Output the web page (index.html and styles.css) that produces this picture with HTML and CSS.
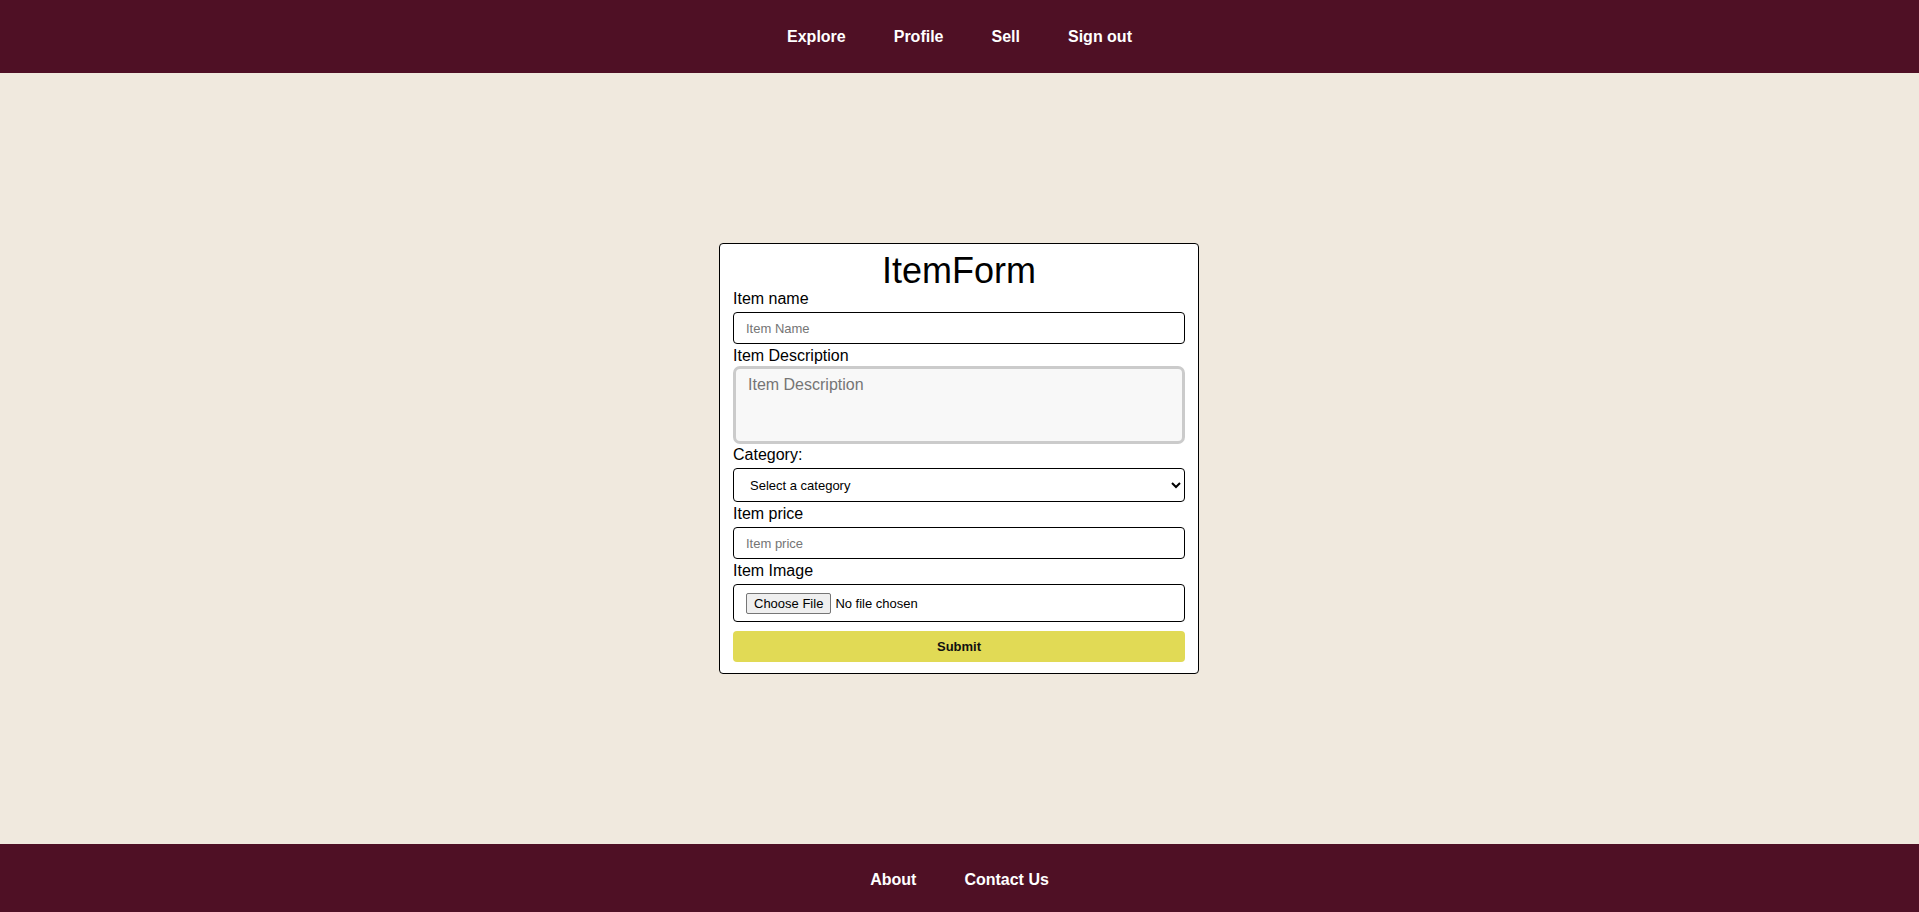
FILE: index.html
```html
<!DOCTYPE html>
<html lang="en">
<head>
<meta charset="utf-8">
<title>ItemForm</title>
<link rel="stylesheet" href="styles.css">
</head>
<body>
<header class="topbar">
  <a class="nav-link" href="#">Explore</a>
  <a class="nav-link" href="#">Profile</a>
  <a class="nav-link" href="#">Sell</a>
  <a class="nav-link" href="#">Sign out</a>
</header>
<main class="main">
  <form class="card">
    <h1 class="card-title">ItemForm</h1>
    <label class="field-label" for="name">Item name</label>
    <input class="text-input input-first" id="name" type="text" placeholder="Item Name">
    <label class="field-label" for="desc">Item Description</label>
    <textarea class="desc-input" id="desc" placeholder="Item Description"></textarea>
    <label class="field-label" for="cat">Category:</label>
    <select class="select-input" id="cat">
      <option>Select a category</option>
      <option>Electronics</option>
      <option>Clothing</option>
      <option>Books</option>
    </select>
    <label class="field-label" for="price">Item price</label>
    <input class="text-input input-price" id="price" type="text" placeholder="Item price">
    <label class="field-label" for="img">Item Image</label>
    <input class="file-input" id="img" type="file">
    <button class="submit-btn" type="button">Submit</button>
  </form>
</main>
<footer class="bottombar">
  <a class="nav-link" href="#">About</a>
  <a class="nav-link" href="#">Contact Us</a>
</footer>
</body>
</html>
```

FILE: styles.css
```css
* { box-sizing: border-box; }

html, body { height: 100%; }

body {
  margin: 0;
  min-height: 100vh;
  display: flex;
  flex-direction: column;
  background: #f0e9de;
  font-family: "Liberation Sans", Arial, sans-serif;
  color: #000;
}

.topbar {
  height: 73px;
  flex: none;
  background: #4f1025;
  display: flex;
  justify-content: center;
  align-items: center;
  gap: 48px;
}

.nav-link {
  color: #fff;
  font-weight: bold;
  font-size: 16px;
  line-height: 18px;
  text-decoration: none;
}

.main {
  flex: 1;
  display: flex;
  justify-content: center;
  align-items: center;
}

.card {
  width: 480px;
  margin-right: 1px;
  background: #fff;
  border: 1px solid #000;
  border-radius: 4px;
  padding: 7px 13px 11px;
  display: flex;
  flex-direction: column;
}

.card-title {
  margin: 0;
  font-size: 36px;
  font-weight: normal;
  line-height: 39px;
  text-align: center;
}

.field-label {
  display: block;
  font-size: 16px;
  line-height: 18px;
}

.text-input {
  height: 32px;
  border: 1px solid #000;
  border-radius: 4px;
  padding: 0 12px;
  font-family: "Liberation Sans", Arial, sans-serif;
  font-size: 13px;
  background: #fff;
  outline: none;
}

.text-input::placeholder { color: #757575; }

.input-first { margin: 4px 0 3px; }
.input-price { margin: 4px 0 3px; }

.desc-input {
  height: 78px;
  margin: 1px 0 2px;
  border: 3px solid #cbcbcb;
  border-radius: 7px;
  background: #f8f8f8;
  padding: 7px 12px;
  font-family: "Liberation Sans", Arial, sans-serif;
  font-size: 16px;
  resize: none;
  outline: none;
}

.desc-input::placeholder { color: #757575; }

.select-input {
  height: 34px;
  margin: 4px 0 3px;
  border: 1px solid #000;
  border-radius: 4px;
  padding: 0 4px 0 12px;
  font-family: "Liberation Sans", Arial, sans-serif;
  font-size: 13px;
  background: #fff;
  color: #000;
}

.file-input {
  height: 38px;
  margin-top: 4px;
  border: 1px solid #000;
  border-radius: 4px;
  padding: 8px 12px;
  font-family: "Liberation Sans", Arial, sans-serif;
  font-size: 13px;
  background: #fff;
}

.file-input::file-selector-button {
  font-family: "Liberation Sans", Arial, sans-serif;
  font-size: 13px;
  height: 21px;
  padding: 1px 7px;
  border: 1px solid #767676;
  border-radius: 2px;
  background: #efefef;
  color: #000;
  margin-right: 4px;
}

.submit-btn {
  height: 31px;
  margin-top: 9px;
  border: none;
  border-radius: 4px;
  background: #e1da55;
  font-family: "Liberation Sans", Arial, sans-serif;
  font-size: 13px;
  font-weight: bold;
  color: #111;
}

.bottombar {
  height: 68px;
  flex: none;
  background: #4f1025;
  display: flex;
  justify-content: center;
  align-items: flex-start;
  padding-top: 27px;
  gap: 48px;
}
```
